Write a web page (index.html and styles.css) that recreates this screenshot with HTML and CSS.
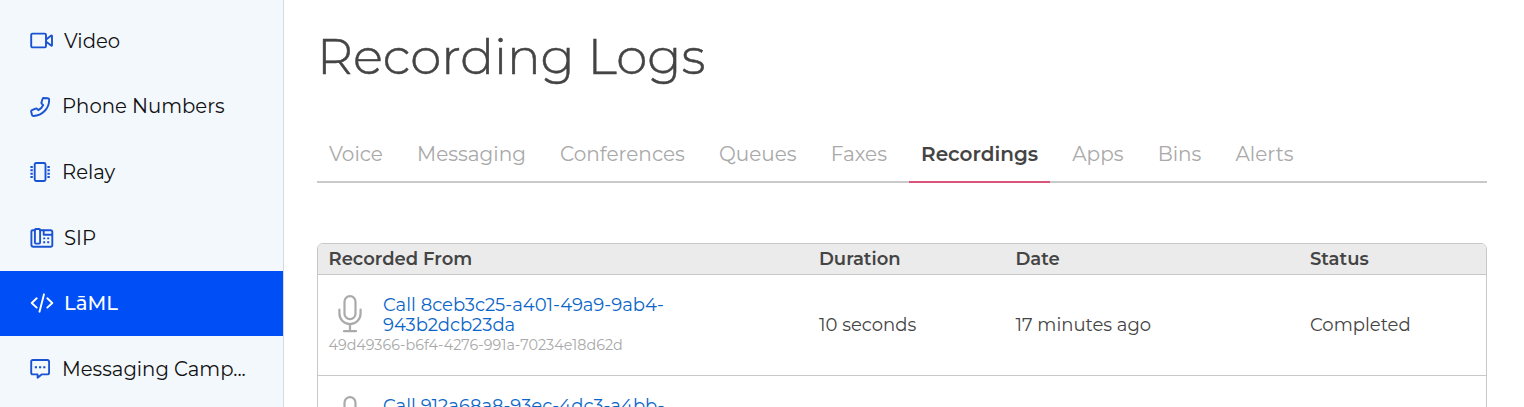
FILE: index.html
```html
<!DOCTYPE html>
<html lang="en">
<head>
<meta charset="utf-8">
<title>Recording Logs</title>
<link rel="stylesheet" href="styles.css">
</head>
<body>
<svg class="defs" width="0" height="0">
  <symbol id="mic" viewBox="0 0 24 38">
    <rect x="6.5" y="1.2" width="11" height="23" rx="5.5"/>
    <path d="M1.4 14.5v4a10.6 10.6 0 0 0 21.2 0v-4M12 29.2v6.6M6 36.2h12"/>
  </symbol>
</svg>
<div class="app">
  <nav class="sidebar">
    <a class="item">
      <svg class="icon wide" viewBox="0 0 24 20"><rect x="1.2" y="2.6" width="14.8" height="13.8" rx="1.3"/><path d="M16.5 8.2 21.2 4.6Q22 4.2 22 5v9.2q0 .8-.8.4L16.5 11"/></svg>
      <span class="label">Video</span>
    </a>
    <a class="item">
      <svg class="icon" viewBox="0 0 20 20"><path d="M13.4 1 17.6 1.2Q19.2 1.3 19.2 2.9C19 11.5 12.3 18.6 3.5 19Q2.3 19 2 17.9L1.2 14.8Q1 13.7 2 13.2L5.6 11.6Q6.5 11.2 7.2 12L8.4 13.2Q11.7 11.5 13.2 8.2L11.900 6.900Q11.200 6.200 11.500 5.400L12.500 1.900Q12.700 1.100 13.400 1Z"/></svg>
      <span class="label">Phone Numbers</span>
    </a>
    <a class="item">
      <svg class="icon" viewBox="0 0 20 20"><rect x="4.7" y="1" width="10.8" height="18" rx="1.5"/><path class="dots" d="M.4 5h2.4M.4 8.300h2.400M.4 11.700h2.400M.4 15h2.400M17.400 5h2.400M17.400 8.300h2.400M17.400 11.700h2.400M17.400 15h2.400"/></svg>
      <span class="label">Relay</span>
    </a>
    <a class="item">
      <svg class="icon wide" viewBox="0 0 24 20"><path d="M4.8 2.2H2.7Q1.4 2.2 1.4 3.5v13.2Q1.4 18.7 3.4 18.7H20.5Q22.3 18.7 22.3 16.9V4Q22.3 2.2 20.5 2.2H10"/><rect x="4.9" y="1" width="5.2" height="14.6" rx="1"/><path d="M13.7 2.5v4.200h8.300"/><path class="dots" d="M13.200 10.400h2M17.200 10.400h2M13.200 14.200h2M17.200 14.200h2"/></svg>
      <span class="label">SIP</span>
    </a>
    <a class="item active">
      <svg class="icon wide" viewBox="0 0 24 20"><path d="M6.7 5.3 1.7 10l5 4.6M17.3 5.3l5 4.7-5 4.6M14 1.3 9.5 18.7"/></svg>
      <span class="label">LāML</span>
    </a>
    <a class="item">
      <svg class="icon" viewBox="0 0 20 20"><path d="M2.8 1H17.4Q19.1 1 19.1 2.7V13.7Q19.1 15.4 17.4 15.4H11.6L7.6 18.7V15.4H2.8Q1.2 15.4 1.2 13.7V2.7Q1.2 1 2.8 1Z"/><path class="dots" d="M4.8 8.3h2.200M9 8.300h2.200M13.200 8.300h2.200"/></svg>
      <span class="label">Messaging Camp...</span>
    </a>
  </nav>
  <main class="main">
    <h1 class="title">Recording Logs</h1>
    <div class="tabs">
      <a class="tab">Voice</a>
      <a class="tab">Messaging</a>
      <a class="tab">Conferences</a>
      <a class="tab">Queues</a>
      <a class="tab">Faxes</a>
      <a class="tab current">Recordings</a>
      <a class="tab">Apps</a>
      <a class="tab">Bins</a>
      <a class="tab">Alerts</a>
    </div>
    <section class="table">
      <div class="row head">
        <span>Recorded From</span>
        <span>Duration</span>
        <span>Date</span>
        <span>Status</span>
      </div>
      <div class="row">
        <div class="from">
          <div class="call">
            <svg class="mic"><use href="#mic"/></svg>
            <a class="link">Call 8ceb3c25-a401-49a9-9ab4-<br>943b2dcb23da</a>
          </div>
          <div class="sid">49d49366-b6f4-4276-991a-70234e18d62d</div>
        </div>
        <span>10 seconds</span>
        <span>17 minutes ago</span>
        <span>Completed</span>
      </div>
      <div class="row">
        <div class="from">
          <div class="call">
            <svg class="mic"><use href="#mic"/></svg>
            <a class="link">Call 912a68a8-93ec-4dc3-a4bb-</a>
          </div>
        </div>
      </div>
    </section>
  </main>
</div>
</body>
</html>
```
FILE: styles.css
```css
* { box-sizing: border-box; }
body {
  margin: 0;
  height: 407px;
  overflow: hidden;
  background: #fff;
  color: #444;
  font-family: Montserrat, Inter, sans-serif;
}
.defs { display: block; height: 0; }
.app { display: flex; height: 407px; overflow: hidden; }

.sidebar {
  flex: none;
  width: 284px;
  height: 407px;
  padding-top: 8.2px;
  background: #f3f8fc;
  border-right: 1px solid #d5dbe2;
  overflow: hidden;
}
.item {
  display: flex;
  align-items: center;
  height: 65.6px;
  padding-left: 30px;
  color: #111;
  font-size: 19.65px;
}
.item.active { background: #004ef6; color: #fff; font-weight: 500; }
.icon {
  width: 20px;
  height: 20px;
  margin-right: 12px;
  fill: none;
  stroke: #1a53d2;
  stroke-width: 1.9;
  stroke-linecap: round;
  stroke-linejoin: round;
}
.icon.wide { width: 24px; margin-right: 10px; }
.active .icon { stroke: #fff; }
.icon .dots { stroke-linecap: butt; }
.label { line-height: 24px; padding-bottom: .3px; white-space: nowrap; }

.main { width: 1203px; padding-left: 33px; }
.title {
  margin: 0;
  padding-top: 27px;
  font-size: 50px;
  line-height: 60px;
  font-weight: 300;
  -webkit-text-stroke: .5px #444;
}
.tabs {
  display: flex;
  gap: 10.15px;
  height: 57px;
  margin-top: 39px;
  border-bottom: 2px solid #c9c9c9;
}
.tab {
  height: 57px;
  padding: 16px 12px 0;
  font-size: 20px;
  line-height: 24px;
  color: #a9a9a9;
  white-space: nowrap;
}
.tab.current { color: #444; font-weight: 600; border-bottom: 2px solid #d9567a; }

.table {
  width: 1170px;
  height: 200px;
  margin-top: 60px;
  border: 1px solid #c8c8c8;
  border-radius: 6px 6px 0 0;
  overflow: hidden;
}
.row {
  display: grid;
  grid-template-columns: 490.5px 196.5px 294.5px 1fr;
  align-items: center;
  height: 101px;
  padding-left: 10.5px;
  border-bottom: 1px solid #c8c8c8;
  font-size: 18px;
  line-height: 20px;
}
.row.head { height: 31px; background: #ebebeb; font-weight: 600; }
.from { align-self: start; padding-top: 20px; }
.call { display: flex; }
.mic {
  width: 24px;
  height: 38px;
  margin: 0 21px 0 9.5px;
  fill: none;
  stroke: #aaa;
  stroke-width: 2.2;
  stroke-linecap: round;
}
.link { color: #0a66c8; }
.sid { margin-top: 1px; font-size: 14.37px; line-height: 18px; color: #a9a9a9; }
```
